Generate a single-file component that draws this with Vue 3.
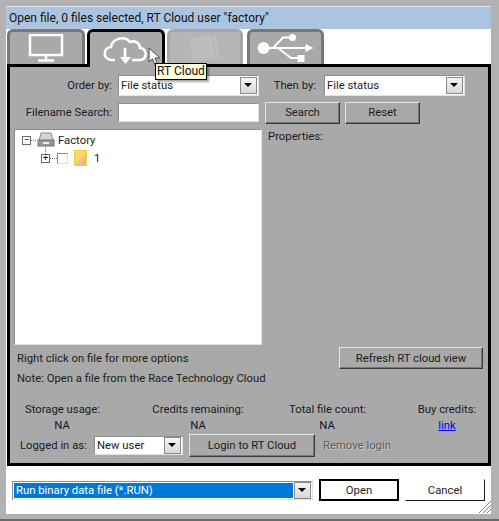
<template>
  <div class="window">
    <div class="title">Open file, 0 files selected, RT Cloud user "factory"</div>
    <div class="body">
      <div class="tabs">
        <div class="tab">
          <svg width="36" height="28" viewBox="2 1 36 28" fill="none" stroke="#fff">
            <rect x="4" y="2" width="32" height="20" stroke-width="2.5" />
            <path d="M20 23v3M12 27.500h16" stroke-width="2.5" />
          </svg>
        </div>
        <div class="tab active">
          <svg width="46" height="31" viewBox="2 0 46 31" fill="none" stroke="#fff" stroke-width="2.6">
            <path d="M14 26h-3c-9 0-10-12-1-13 1-8 13-12 19-5 5-2 10 1 10 6 7 0 8 12 0 12h-8" />
            <path d="M24 14v13" />
            <path d="M19 23l5.500 7 5.500-7z" fill="#fff" stroke="none" />
          </svg>
        </div>
        <div class="tab disabled">
          <svg width="36" height="28" viewBox="2 0 36 28">
            <path d="M4 4l27-3 4 23-27 4z" fill="#bdbdbd" />
            <path d="M27 2l4 22" stroke="#b2b2b2" fill="none" />
          </svg>
        </div>
        <div class="tab usb">
          <svg width="60" height="30" viewBox="0 0 60 30" fill="none" stroke="#fff" stroke-width="2">
            <circle cx="7.500" cy="15" r="6" fill="#fff" stroke="none" />
            <path d="M12 15h40M17 15L27 4.500h8M22 15l13 10h7" />
            <circle cx="36.500" cy="4.500" r="3.500" fill="#fff" stroke="none" />
            <rect x="41.500" y="22" width="7" height="7" fill="#fff" stroke="none" />
            <path d="M49.500 11l8 4-8 4z" fill="#fff" stroke="none" />
          </svg>
        </div>
      </div>

      <div class="panel">
        <div class="row sort-row">
          <label class="lbl lbl-main">Order by:</label>
          <div class="combo combo-sort">
            <span>File status</span>
            <i class="arrow"></i>
          </div>
          <label class="lbl lbl-then">Then by:</label>
          <div class="combo combo-sort">
            <span>File status</span>
            <i class="arrow"></i>
          </div>
        </div>

        <div class="row search-row">
          <label class="lbl lbl-main">Filename Search:</label>
          <div class="input"></div>
          <button class="btn btn-search">Search</button>
          <button class="btn btn-search">Reset</button>
        </div>

        <div class="middle">
          <div class="tree">
            <div class="node">
              <span class="expander">&minus;</span>
              <span class="dots"></span>
              <svg width="18" height="16" viewBox="0 0 18 16">
                <path d="M4 1h10l2 8H2z" fill="#d6d6d6" stroke="#8a8a8a" />
                <rect x="1" y="8" width="16" height="6" fill="#9a9a9a" stroke="#707070" />
                <rect x="6" y="10" width="6" height="2" fill="#ececec" />
              </svg>
              <span class="node-name">Factory</span>
            </div>
            <div class="node child">
              <span class="expander">+</span>
              <span class="dots short"></span>
              <span class="check"></span>
              <svg class="doc" width="13" height="16" viewBox="0 0 13 16">
                <rect x="0.500" y="0.500" width="12" height="15" fill="#fdd56b" stroke="#f5cb45" />
                <path d="M1 15L12 3v9l-3 3z" fill="#f2bd8e" />
                <path d="M10 15v-3h2" fill="none" stroke="#9ac23c" />
              </svg>
              <span class="node-name num">1</span>
            </div>
          </div>
          <div class="properties">Properties:</div>
        </div>

        <div class="row hint-row">
          <div class="hints">
            <div>Right click on file for more options</div>
            <div>Note: Open a file from the Race Technology Cloud</div>
          </div>
          <button class="btn btn-refresh">Refresh RT cloud view</button>
        </div>

        <div class="stats">
          <div class="stat" v-for="s in stats" :key="s.label">
            <div>{{ s.label }}</div>
            <a v-if="s.link" class="link">link</a>
            <div v-else class="val">NA</div>
          </div>
        </div>

        <div class="row login-row">
          <label class="lbl-login">Logged in as:</label>
          <div class="combo combo-user">
            <span>New user</span>
            <i class="arrow"></i>
          </div>
          <button class="btn btn-login">Login to RT Cloud</button>
          <span class="remove">Remove login</span>
        </div>
      </div>

      <div class="footer">
        <div class="combo combo-type">
          <span class="selected">Run binary data file (*.RUN)</span>
          <i class="arrow"></i>
        </div>
        <button class="btn btn-foot btn-default">Open</button>
        <button class="btn btn-foot btn-cancel">Cancel</button>
        <svg class="grip" width="13" height="13" viewBox="0 0 13 13" stroke="#808080" fill="none">
          <path d="M1 13L13 1M5 13l8-8M9 13l4-4" />
        </svg>
      </div>

      <div class="tooltip">RT Cloud</div>
      <svg class="cursor" width="14" height="20" viewBox="0 0 14 20">
        <path d="M1 1v14l3.500-3.200 2.500 6 2.500-1-2.500-5.800h5z" fill="#f4f4f4" stroke="#4a4a4a" stroke-width="1" />
      </svg>
    </div>
  </div>
</template>

<script setup>
const stats = [
  { label: 'Storage usage:' },
  { label: 'Credits remaining:' },
  { label: 'Total file count:' },
  { label: 'Buy credits:', link: true }
]
</script>

<style>
body {
  margin: 0;
  background: #b2b2b2;
}
</style>

<style scoped>
.window {
  width: 499px;
  height: 521px;
  box-sizing: border-box;
  padding: 6px 8px 7px 6px;
  background: #b2b2b2;
  font-family: Roboto, "Liberation Sans", sans-serif;
  font-size: 11.300px;
  color: #1c1c1c;
  overflow: hidden;
  box-shadow: inset 0 -2px 0 #6a6a6a;
}

.title {
  height: 23px;
  line-height: 23px;
  padding-left: 3px;
  background: #abc5e1;
  border-top: 1px solid #dfe6ee;
  box-sizing: border-box;
  color: #111;
  font-size: 12px;
}

.body {
  position: relative;
  height: 485px;
  background: #fff;
}

.tabs {
  display: flex;
  height: 35px;
  padding-left: 1px;
  gap: 2px;
}

.tab {
  width: 78px;
  height: 35px;
  box-sizing: border-box;
  border: 3px solid #777;
  border-bottom: 0;
  border-radius: 6px 6px 0 0;
  background: #a9a9a9;
  display: flex;
  align-items: center;
  justify-content: center;
}

.tab.active {
  height: 38px;
  border-color: #000;
  position: relative;
  z-index: 1;
}

.tab.disabled {
  width: 76px;
  border-color: #a6a6a6;
  background: #b5b5b5;
}

.tab.usb {
  width: 77px;
  margin-left: 2px;
}

.panel {
  margin-left: 1px;
  width: 484px;
  height: 402px;
  box-sizing: border-box;
  border: 3px solid #000;
  background: #a9a9a9;
  padding: 8px 0 0 4px;
}

.row {
  display: flex;
  align-items: center;
}

.lbl {
  text-align: right;
}

.lbl-main {
  width: 98px;
  margin-right: 6px;
}

.lbl-then {
  width: 43px;
  margin: 0 8px 0 14px;
  white-space: nowrap;
}

.combo {
  display: flex;
  align-items: center;
  justify-content: space-between;
  box-sizing: border-box;
  background: #fff;
  border: 1px solid #8e8e8e;
  border-right-color: #e2e2e2;
  border-bottom-color: #e2e2e2;
  padding: 0 1px 0 2px;
  white-space: nowrap;
}

.combo-sort {
  width: 141px;
  height: 21px;
}

.arrow {
  width: 17px;
  height: 17px;
  box-sizing: border-box;
  background: linear-gradient(#f4f4f4, #d8d8d8);
  border: 1px solid #8a8a8a;
  position: relative;
  flex-shrink: 0;
}

.arrow::after {
  content: "";
  position: absolute;
  left: 3px;
  top: 5px;
  border: 4px solid transparent;
  border-top: 4px solid #000;
  border-bottom: 0;
}

.search-row {
  margin-top: 5px;
  height: 23px;
}

.input {
  width: 141px;
  height: 19px;
  box-sizing: border-box;
  background: #fff;
  border: 1px solid #8e8e8e;
  border-right-color: #e2e2e2;
  border-bottom-color: #e2e2e2;
  margin-right: 6px;
}

.btn {
  font: inherit;
  color: inherit;
  padding: 0;
  background: #a9a9a9;
  border: 1px solid;
  border-color: #e4e4e4 #3a3a3a #3a3a3a #e4e4e4;
  box-shadow: inset -1px -1px 0 #777;
}

.btn-search {
  width: 75px;
  height: 22px;
  margin-right: 5px;
}

.middle {
  display: flex;
  margin-top: 5px;
  height: 216px;
}

.tree {
  width: 248px;
  box-sizing: border-box;
  background: #fff;
  border: 1px solid #8e8e8e;
  border-right-color: #e2e2e2;
  border-bottom-color: #e2e2e2;
  padding: 1px 0 0 7px;
}

.node {
  display: flex;
  align-items: center;
  height: 18px;
}

.node.child {
  padding-left: 19px;
}

.expander {
  position: relative;
  width: 9px;
  height: 9px;
  box-sizing: border-box;
  border: 1px solid #6a6a6a;
  font-size: 9px;
  line-height: 6px;
  text-align: center;
  color: #000;
}

.child .expander::before {
  content: "";
  position: absolute;
  left: 3px;
  top: -10px;
  height: 9px;
  border-left: 1px dotted #777;
}

.dots {
  width: 5px;
  border-top: 1px dotted #777;
  margin-right: 1px;
}

.dots.short {
  width: 7px;
  margin-right: 0;
}

.node-name {
  margin-left: 3px;
}

.node-name.num {
  margin-left: 7px;
  color: #1c1030;
}

.check {
  width: 11px;
  height: 11px;
  box-sizing: border-box;
  border: 1px solid #888;
  border-right-color: #ddd;
  border-bottom-color: #ddd;
  margin-right: 6px;
}

.properties {
  margin: 2px 0 0 6px;
  line-height: 12px;
}

.hint-row {
  align-items: flex-start;
  margin-top: 2px;
  height: 51px;
}

.hints {
  width: 322px;
  padding: 2px 0 0 3px;
  line-height: 20px;
}

.btn-refresh {
  width: 144px;
  height: 22px;
}

.stats {
  display: flex;
  padding-left: 11px;
  margin-top: 4px;
  line-height: 16px;
  text-align: center;
}

.stat {
  white-space: nowrap;
}

.stat:nth-child(1) {
  width: 74px;
  margin-right: 53px;
}

.stat:nth-child(2) {
  width: 92px;
  margin-right: 45px;
}

.stat:nth-child(3) {
  width: 76px;
  margin-right: 52px;
}

.stat:nth-child(4) {
  width: 60px;
}

.val {
  color: #1c1030;
}

.link {
  color: #0000ee;
  text-decoration: underline;
}

.login-row {
  height: 23px;
}

.lbl-login {
  margin-left: 6px;
  width: 74px;
}

.combo-user {
  width: 89px;
  height: 19px;
}

.btn-login {
  width: 126px;
  height: 23px;
  margin: 0 8px 0 6px;
}

.remove {
  color: #5e5e5e;
  text-shadow: 1px 1px 0 #c8c8c8;
}

.footer {
  display: flex;
  align-items: center;
  position: relative;
  height: 48px;
  padding-left: 6px;
}

.combo-type {
  width: 301px;
  height: 19px;
  padding: 1px;
  margin-right: 6px;
}

.selected {
  flex: 1;
  align-self: stretch;
  background: #0078d7;
  color: #fff;
  padding-left: 2px;
  line-height: 15px;
  margin-right: 1px;
}

.btn-foot {
  width: 80px;
  height: 22px;
  background: #fff;
  margin-right: 6px;
  box-shadow: none;
}

.btn-default {
  border: 2px solid #000;
}

.btn-cancel {
  border: 1px solid;
  border-color: #fff #222 #222 #fff;
}

.grip {
  position: absolute;
  right: 0;
  bottom: 1px;
}

.tooltip {
  position: absolute;
  z-index: 3;
  left: 149px;
  top: 34px;
  width: 52px;
  height: 17px;
  line-height: 15px;
  box-sizing: border-box;
  text-align: center;
  background: #ffffe1;
  border: 1px solid #000;
  box-shadow: 2px 2px 2px rgba(0, 0, 0, 0.35);
  color: #111;
  font-size: 12px;
}

.cursor {
  position: absolute;
  z-index: 2;
  left: 142px;
  top: 18px;
}
</style>
